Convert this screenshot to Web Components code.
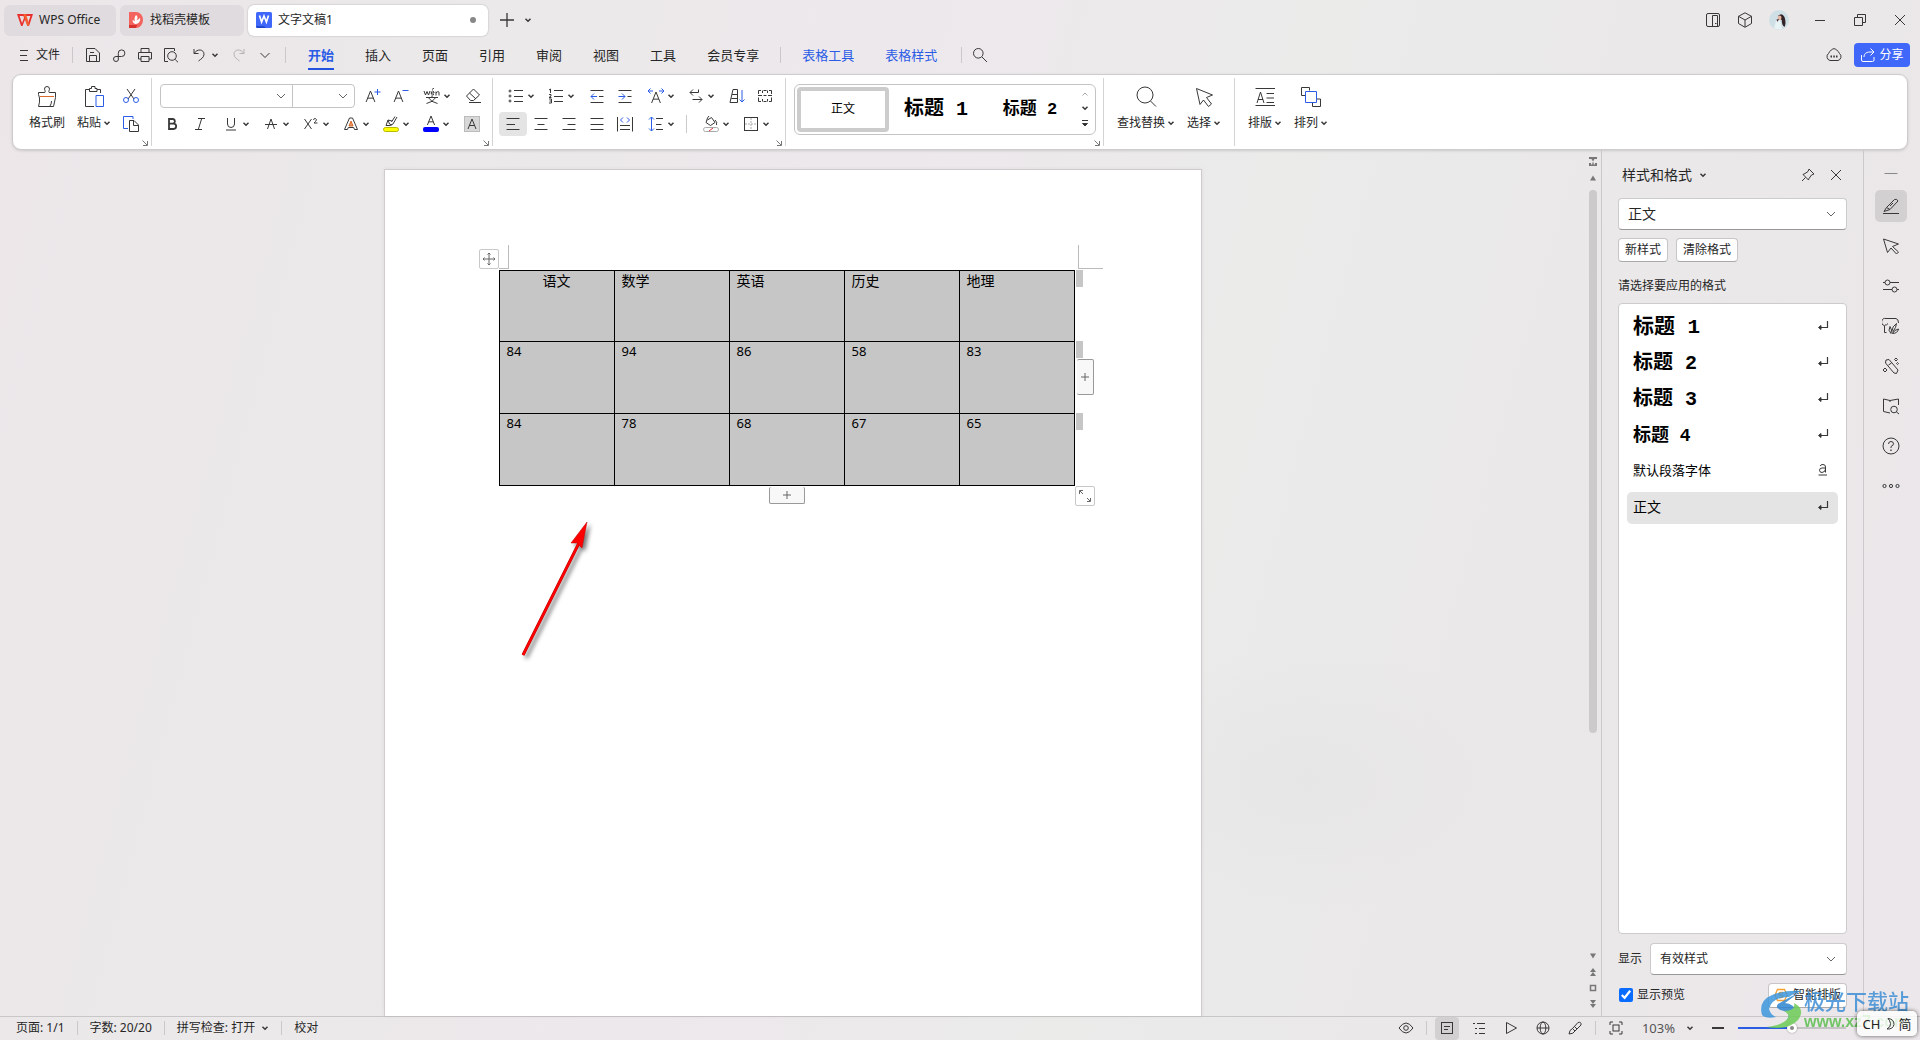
<!DOCTYPE html>
<html lang="zh-CN">
<head>
<meta charset="utf-8">
<title>文字文稿1 - WPS Office</title>
<style>
html,body{margin:0;height:100%;overflow:hidden}
body{font-family:"Noto Sans","Noto Sans CJK SC",sans-serif;font-size:12px;line-height:16px;color:#262626}
</style>
</head>
<body>
<wps-app></wps-app>
<script>
const s = (d, extra = '') => `<path d="${d}" ${extra}/>`;
const BLUE = 'stroke="#2b5ce6"';
const letterA = (x, y, h) => s(`M${x - h * .4} ${y + h}L${x} ${y}L${x + h * .4} ${y + h}M${x - h * .26} ${y + h * .65}H${x + h * .26}`);
// name: [width, height, markup]
const ICONS = {
  caret: [8, 8, s('M1.5 2.8L4 5.2L6.5 2.8', 'stroke-width="1.5"')],
  chev: [12, 12, s('M2 4L6 8L10 4', 'stroke="#666"')],
  launch: [8, 8, s('M1.5 1.5L6 6M6.5 2V6.5H2', 'stroke="#777"')],
  wps: [16, 14, `<g stroke="none"><path fill="#e8302f" d="M0 1H16L12 13H10.400L8 6.500L5.500 13H4.100Z"/><path fill="#e9dfe1" d="M2.600 3H6.400L7 5L5 10ZM9 3H13.400L11.300 9.500L8.600 4Z"/><path fill="#f4602f" d="M6.300 1H9L12.200 11L11.500 13H10.400Z"/></g>`],
  daoke: [16, 16, `<g stroke="none"><path fill="#f4645f" d="M1 0H8A7 8 0 0 1 8 16H1Z"/><path fill="#d8322f" d="M1 13H9L8 16H1Z"/><path fill="#fff" d="M8 3C10.500 5 9.500 7 8.500 8.200C10 8 11.500 7 12 5.800C13 9.500 10 12 8 12C5.500 12 4 9.500 5 7.500C5.300 8.500 6 9 6.800 9C6.300 7 6.500 5 8 3Z"/></g>`],
  word: [16, 16, `<g stroke="none"><rect width="16" height="16" rx="1.500" fill="#3f68fa"/><path fill="#2148cf" d="M0 14H8L10 16H1.500Q0 16 0 14Z"/></g>` + s('M3.500 3.500L5.600 10L8 4L10.400 10L12.500 3.500', 'stroke="#fff" stroke-width="1.700"')],
  plus: [14, 14, s('M7 0V14M0 7H14', 'stroke-width="1.300"')],
  panels: [16, 16, '<rect x="1.5" y="1.5" width="13" height="13" rx="1.5"/>' + s('M7.500 14.500V3.500H12.500V14.500M10 11.500H11.500') ],
  cube: [16, 16, s('M8 .8L14.500 4.300V11.500L8 15.300L1.500 11.500V4.300ZM1.500 4.300L8 8L14.500 4.300M8 8V15')],
  avatar: [20, 20, '<g stroke="none"><circle cx="10" cy="10" r="10" fill="#cfdfe6"/><path fill="#e9f2f5" d="M5 18L7 11L11 10L13 19Q9 20.500 5 18Z"/><path fill="#35232a" d="M9 6Q13 2 15.500 7Q17.500 13 15.500 17Q12.500 15 12.800 10L9 9Z"/><path fill="#e5b9a5" d="M8.500 6.500Q11 4.500 12.500 7L12 10Q9 10.500 8.500 6.500Z"/><path fill="#4b3238" d="M7.500 9.500L10 9L8.500 12Z"/></g>'],
  min: [12, 12, s('M1 6.500H11')],
  minus: [12, 12, s('M0 6H12', 'stroke-width="2"')],
  restore: [12, 12, s('M3.500 3V.500H11.500V8.500H9M.500 3.500H8.500V11.500H.500Z')],
  close: [12, 12, s('M1 1L11 11M11 1L1 11')],
  menu: [10, 12, s('M1 1.500H9M1 6.500H8M1 11.500H9')],
  save: [16, 16, s('M1.500 1.500H10L14.500 6V14.500H1.500ZM4.500 14V8.500H11.500V14M5 5.500H9')],
  link: [16, 16, s('M7.500 12A2.500 2.500 0 1 1 5 9.500H10.500A3.300 3.300 0 1 0 7.300 6.500V12')],
  print: [16, 16, s('M4 5V1.500H12V5M4 12H1.500V5.500H14.500V12H12M4 9.500H12V14.500H4Z')],
  preview: [16, 16, s('M5 14.500H1.500V1.500H11.500V4M12.200 12.500L15 15.300') + '<circle cx="9" cy="9" r="4.300"/>'],
  undo: [16, 16, s('M3 2V6.500H7.500M3.300 6.300C6 1.500 13 2 13 7.300C13 10.500 10 12 7.500 14')],
  redo: [16, 16, s('M13 2V6.500H8.500M12.700 6.300C10 1.500 3 2 3 7.300C3 10.500 6 12 8.500 14', 'stroke="#b5b3b5"')],
  down: [12, 12, s('M1.500 4L6 8.500L10.500 4')],
  search: [16, 16, '<circle cx="6.300" cy="6.300" r="4.800"/>' + s('M10 10L15 15')],
  cloud: [18, 16, s('M5 13.500A4 4 0 0 1 3.500 6.500C5 3.500 7.500 1.700 9 1.700C10.500 1.700 13 3.500 14.500 6.500A4 4 0 0 1 13 13.500Z') + s('M5.500 9.500H7M8.300 9.500H9.800M11 9.500H12.500', 'stroke-width="1.800"')],
  share: [16, 16, s('M10.500 1.500L14 5L10.500 8.500M14 5H10C5.500 5 4 7.500 4 10M1.500 8V13Q1.500 14.500 3 14.500H12.500Q14 14.500 14 13V10', 'stroke="#fff"')],
  brush: [22, 22, s('M2.500 8.500V6.500H8.800C9.800 5.500 8.500 4 8.500 3A2.500 2.500 0 0 1 13.500 3C13.500 4 12.200 5.500 13.200 6.500H19.500V11.500L17.500 20.500H2.500Q4 16 3.500 12L2.500 8.500M14 20Q15.500 18 15.500 15') + s('M4 10.500H18', 'stroke="#d96a2b"')],
  paste: [22, 22, s('M6 3.500H2.500V20.500H11M14 3.500H17.500V7M6.500 5.500V2.500H8.500V.500H12V2.500H14V5.500Z') + s('M13 9.500H20.500V20.500H13Z', BLUE)],
  cut: [16, 16, s('M4 1L11 11M12 1L5 11') + '<g stroke="#2b5ce6"><circle cx="3" cy="12" r="2.500"/><circle cx="13" cy="12" r="2.500"/></g>'],
  copy: [18, 18, s('M6 13.500H1.500V1.500H11V4', BLUE) + s('M7.500 5.500H12L16.500 10V16.500H7.500ZM11.500 6V10.500H16')],
  aplus: [16, 16, letterA(5.5, 3, 11) + s('M12.500 1V7M9.500 4H15.500', BLUE)],
  aminus: [16, 16, letterA(5.5, 3, 11) + s('M9.500 2.500H15.500', BLUE)],
  wen: [18, 16, s('M1 3L2.500 7L4 3.500L5.500 7L7 3M8 5H11V4Q9.500 2 8.300 4V6Q9 7.500 11 6.500M9 1.500L11 0M13 7.500V3.500M13 5Q16 2 16 5V7.500M3 9.500H15M9 7.500V9.500M5.500 9.800Q8 14 14.500 15.500M12.500 9.800Q10 14 3.500 15.500')],
  eraser: [16, 16, s('M1.500 8L8.500 1L14.500 7L8.500 12.500H5.500ZM4.500 5L11 11M4 14.500H16')],
  bold: [16, 16, s('M5 3H9A2.400 2.400 0 0 1 9 7.700H5ZM5 7.700H9.500A2.600 2.600 0 0 1 9.500 13H5Z', 'stroke-width="1.800"')],
  italic: [16, 16, s('M6 2.500H13M3 13.500H10M9.700 2.500L6.300 13.500')],
  under: [16, 16, s('M4.500 2V8A3.500 3.500 0 0 0 11.500 8V2M3 14H13')],
  strike: [16, 16, s('M4.500 13L8 3L11.500 13M2 8.500H14')],
  sup: [16, 16, s('M1.500 3L8.500 13M8.500 3L1.500 13M10.500 4Q11 2 12.500 2.500Q14.500 3.500 12.500 5.500L11 7H14.500')],
  aout: [16, 16, s('M1.500 13.500L6.500 2H9.500L14.500 13.500H11.500L10.700 11.500H5.300L4.500 13.500Z') + s('M8 5L10 10H6Z', 'stroke="#d96a2b" fill="#e59a6a"')],
  mark: [16, 18, s('M3 10.500L5 5L6.500 9L9 10M3 10.500H7L10 9L14 2M8.500 7L12 1.500M5 5L9 6') + '<rect x=".5" y="12.500" width="15" height="4" rx="2" fill="#ff0" stroke="#b9b900"/>'],
  fcolor: [16, 18, letterA(8, 1, 9) + '<rect y="12" width="16" height="5" rx="2" fill="#00f" stroke="none"/>'],
  shade: [16, 16, '<rect x=".5" y=".5" width="15" height="15" fill="#d8d8d8" stroke="#bbb"/>' + letterA(8, 3, 10)],
  bullets: [16, 16, '<circle cx="2" cy="3" r="1"/><circle cx="2" cy="8" r="1"/><circle cx="2" cy="13" r="1"/>' + s('M6 2.500H15M6 8.500H15M6 13.500H15')],
  nums: [16, 16, s('M1 2L2.500 1V5M1 6.500H3V8L1 9.500H3.500M1 11H3.500V15H1M1.500 13H3.500M6 2.500H15M6 8.500H15M6 13.500H15')],
  outd: [16, 16, s('M1.500 2.500H14.500M10 8.500H14.500M1.500 14.500H14.500') + s('M8 8.500H2M5 5.500L2 8.500L5 11.500', BLUE)],
  ind: [16, 16, s('M1.500 2.500H14.500M10.500 8.500H14.500M1.500 14.500H14.500') + s('M1.500 8.500H8M5 5.500L8 8.500L5 11.500', BLUE)],
  ascale: [18, 16, letterA(9, 4, 11) + s('M6 3H1M3.500 .500L1 3L3.500 5.500M12 3H17M14.500 .500L17 3L14.500 5.500', BLUE)],
  wrap: [16, 16, s('M5 1.500L2 4.500L5 7.500M2 4.500H10.500V1.500M11 8.500L14 11.500L11 14.500M14 11.500H4.500')],
  sort: [16, 16, s('M1 14.500H8.500V1.500H4ZM3 6.500H8M2.300 10.500H8') + s('M13 2V14M10.500 11.500L13 14L15.500 11.500', BLUE)],
  ruler: [16, 16, s('M1.500 6V2.500H4M6.500 2.500H9.500M12 2.500H14.500V6M1.500 9.500V13.500H4M6.500 13.500H9.500M12 13.500H14.500V9.500M1 7.500H5M6.500 7.500H9.500M11 7.500H15M5.500 2.500V5M10.500 2.500V5M5.500 11V13.500M10.500 11V13.500')],
  al: [16, 16, s('M1.500 2.500H14.500M1.500 8.500H10M1.500 13.500H14.500')],
  ac: [16, 16, s('M1.500 2.500H14.500M4.500 8.500H11.500M1.500 13.500H14.500')],
  ar: [16, 16, s('M1.500 2.500H14.500M6.500 8.500H14.500M1.500 13.500H14.500')],
  aj: [16, 16, s('M1.500 2.500H14.500M1.500 8.500H14.500M1.500 13.500H14.500')],
  dist: [16, 16, s('M.5 1V15.500M15.500 1V15.500M3 9.500H13M3 13.500H13') + s('M6 1.500L3.500 4L6 6.500M10 1.500L12.500 4L10 6.500', BLUE)],
  lines: [16, 16, s('M8 2.500H15M8 8.500H13.500M8 13.500H15') + s('M3.500 1V15M1 3.500L3.500 1L6 3.500M1 12.500L3.500 15L6 12.500', BLUE)],
  bucket: [16, 18, s('M6 1L4.500 3L3 7.500L7.500 10.500L12 7.500L8.500 2.500L4.500 5M12 5Q14.500 7 13.500 10') + '<rect x=".5" y="12.500" width="15" height="4" rx="2" stroke="#aaa"/>' + s('M6 16L10 13', 'stroke="#e03030"')],
  borders: [16, 16, '<rect x="1.500" y="1.500" width="13" height="13"/>' + s('M8 2V14M2 8H14', 'stroke="#aaa" stroke-dasharray="2 1"')],
  up8: [8, 8, s('M1.500 5.500L4 3L6.500 5.500', 'stroke="#aaa"')],
  more8: [8, 10, s('M1 1.500H7') + s('M1.500 4.500H6.500L4 7Z', 'fill="#333"')],
  find: [22, 22, '<circle cx="10" cy="9" r="8"/>' + s('M15.500 15L21 20.500')],
  arrow: [22, 22, s('M3.500 2.500L19.500 9L13.500 11.500L18.500 18L15.500 20.500L10.500 14L7 18.500Z')],
  layout: [22, 22, s('M1.500 2.500H21M1.500 19.500H21M3 17L6.500 6L10 17M4 13.500H9M12.500 7.500H20M12.500 12H20M12.500 16.500H20')],
  arrange: [22, 22, s('M5.500 9.500H1.500V1.500H9.500V4.500M16.500 13H20.500V20.500H12.500V17') + s('M5.500 5.500H16.500V16.500H5.500Z', BLUE)],
  move: [14, 14, s('M7 1V13M1 7H13M5.500 2.500L7 1L8.500 2.500M5.500 11.500L7 13L8.500 11.500M2.500 5.500L1 7L2.500 8.500M11.500 5.500L13 7L11.500 8.500', 'stroke="#666"')],
  plus8: [8, 8, s('M4 0V8M0 4H8', 'stroke="#666"')],
  resize: [14, 14, s('M1.500 5V1.500H5M2 2L5 5M12.500 9V12.500H9M9 9L12 12', 'stroke="#666"')],
  split: [10, 10, '<g stroke="none" fill="#777"><path d="M1 0H9V2H6.500L5 4.500L3.500 2H1ZM1 9V6H3V7.500H4.300V5.500H5.700V7.500H7V6H9V9Z"/></g>'],
  tup: [8, 8, '<path fill="#777" stroke="none" d="M1 6.500L4 1.500L7 6.500Z"/>'],
  tdn: [8, 8, '<path fill="#777" stroke="none" d="M1 1.500L4 6.500L7 1.500Z"/>'],
  dup: [8, 8, '<path fill="#777" stroke="none" d="M1 4L4 0L7 4ZM1 8L4 4L7 8Z"/>'],
  ddn: [8, 8, '<path fill="#777" stroke="none" d="M1 0L4 4L7 0ZM1 4L4 8L7 4Z"/>'],
  sq: [8, 8, '<rect x="1.500" y="1.500" width="5" height="5" stroke="#777" stroke-width="1.500"/>'],
  pin: [14, 14, s('M8 1L13 6L10.500 7L8 10.500L7.500 12L2 6.500L4 5.500L7 3.500ZM4.500 9.500L1 13')],
  dash: [16, 4, s('M1.500 1.500H14.500', 'stroke="#888"')],
  pen: [18, 18, s('M4.500 10.500L12.500 2.500Q15 1.500 16 4L8 12.500ZM4.500 10.500L2 14.500L8 12.500M8 9L11 6M1 16.500H17')],
  sel: [18, 18, s('M1.500 2L16.500 7L10.500 9.500L16.500 15L14.500 17L9 11L5.500 15.500Z')],
  sliders: [18, 18, '<circle cx="5.500" cy="5.500" r="2.500"/><circle cx="12.500" cy="12.500" r="2.500"/>' + s('M1 5.500H3M8 5.500H17M1 12.500H10M15 12.500H17')],
  image: [18, 18, s('M4.500 15.500H2.500V8.500A3.500 3.500 0 0 1 4 1.500H14Q16.500 2 16.500 6M3 8Q4.500 8.500 6 6.500M9 16.500Q5.500 13.500 8 9.500Q10.500 13 9 16.500M10 14Q10 9.500 14.500 6.500Q14.500 10 10.500 15.500M10.500 16.500Q12.500 12.500 16.500 12Q15.500 16.500 10.500 16.500')],
  wand: [18, 18, s('M4 3L7 2.500L16 13L14.500 16.500L12 16L3.500 6ZM6.500 8L9.500 6M14 1L15.500 2.500L14 4L12.500 2.500ZM3 11L5 13L3 15L1 13ZM15.500 5.500L16.500 6.500L15.500 7.500L14.500 6.500Z')],
  book: [18, 18, s('M8 16L1.500 14.500V2L8 3.500L16.500 2V8M8 3.500V5M14.500 15L17 17') + '<circle cx="12" cy="12.500" r="3.300"/>'],
  help: [18, 18, '<circle cx="9" cy="9" r="8"/>' + s('M6.500 7Q6.500 4.500 9 4.500Q11.500 4.500 11.500 6.800Q11.500 8.300 9 9.500V11') + s('M9 12.500V14', 'stroke-width="1.300"')],
  dots: [18, 6, '<circle cx="2.500" cy="3" r="1.600"/><circle cx="9" cy="3" r="1.600"/><circle cx="15.500" cy="3" r="1.600"/>'],
  ret: [12, 12, s('M10.500 1V7.500H2', 'stroke-width="1.200"') + '<path fill="#333" d="M1.500 7.500L4 5.500V9.500Z"/>'],
  und: [12, 14, s('M3 3Q3.500 1.500 6 1.500Q8.500 1.500 8.500 4V9.500M8.500 5H5Q2.500 5 2.500 7.200Q2.500 9.500 5 9.500Q8.500 9 8.500 6M1.500 12H10')],
  smart: [14, 14, s('M3.500 1.500H10.500L13 7L10.500 12.500H3.500L1 7ZM9 4.500H6.500Q5 4.500 5 5.800Q5 7 7 7Q9 7 9 8.300Q9 9.500 7.500 9.500H5', 'stroke="#f5a030" stroke-width="1.300"')],
  eye: [16, 16, s('M1 8Q4.500 3 8 3Q11.500 3 15 8Q11.500 13 8 13Q4.500 13 1 8Z') + '<circle cx="8" cy="8" r="2.300"/>'],
  doc: [14, 14, '<rect x="1.500" y="1.500" width="11" height="11"/>' + s('M4 5.500H10M4 8.500H8')],
  outline: [14, 14, s('M1 2.500H3M5 2.500H13M3 7.500H5M7 7.500H13M3 12.500H5M7 12.500H13')],
  play: [14, 14, s('M2.500 1.500L12.500 7L2.500 12.500Z')],
  globe: [14, 14, '<circle cx="7" cy="7" r="6"/><ellipse cx="7" cy="7" rx="2.800" ry="6"/>' + s('M1 7H13')],
  ink: [14, 14, s('M4.500 7.500L10 1.500Q13.500 .500 13 4L7 10ZM4.500 7.500Q1.500 8.500 1 13Q5.500 13 7 10M6.500 5.500L9 8')],
  fit: [14, 14, '<rect x="4" y="4" width="6" height="6"/>' + s('M1 4V1H4M10 1H13V4M13 10V13H10M4 13H1V10')],
  moon: [14, 14, s('M6 1.500Q12 2 12 7.500Q11 12.500 5 12Q9 10 8.500 6.500Q8 3.500 6 1.500Z')],
  logo: [44, 42, '<g stroke="none"><path fill="#3d97dd" d="M2 26Q-2 12 12 6Q24 1 42 2Q34 4 29 8Q12 8 9 20Q10 25 16 28Q6 30 2 26Z"/><path fill="#2f86d0" d="M40 3Q30 8 18 15Q14 20 24 22Q32 25 26 32Q40 24 33 17Q29 14 25 14Z"/><path fill="#6ecb58" d="M6 38Q24 36 28 29Q30 25 24 22Q36 22 34 14Q46 20 38 31Q28 42 6 38Z"/></g>']
};

class Base extends HTMLElement {
  constructor() {
    super();
    this.attachShadow({ mode: 'open' }).innerHTML = `<style>
      *{box-sizing:border-box}
      button,select,input{font:inherit;color:inherit;margin:0}
      button{border:0;background:none;padding:0;display:inline-flex;align-items:center;justify-content:center;flex:none;white-space:nowrap}
      .vr{width:1px;background:#cbc8cb;flex:none}
      ${this.constructor.css}</style>${this.constructor.html}`;
  }
}
const define = (name, css, html) => customElements.define(name, class extends Base {
  static css = css;
  static html = html;
});
const ic = n => `<ui-icon name="${n}"></ui-icon>`;

customElements.define('ui-icon', class extends HTMLElement {
  constructor() { super(); this.attachShadow({ mode: 'open' }); }
  connectedCallback() {
    const [w, h, body] = ICONS[this.getAttribute('name')];
    this.shadowRoot.innerHTML = `<style>:host{display:inline-flex;flex:none}svg{display:block;fill:none;stroke:#383838;stroke-width:1}</style>
      <svg width="${w}" height="${h}" viewBox="0 0 ${w} ${h}" aria-hidden="true">${body}</svg>`;
  }
});

define('title-bar', `
  :host{display:flex;align-items:center;height:40px;padding:0 2px 0 4px;gap:4px}
  .tab{height:31px;border-radius:6px;background:#e0dbde;gap:6px;justify-content:flex-start;padding:0 0 0 13px;width:112px}
  .t2{width:124px;padding:0 8px}
  .t3{width:240px;background:#fff;padding:0 12px 0 8px;box-shadow:0 0 2px #0004}
  .t3 span{flex:1;text-align:left}
  .t3 i{width:6px;height:6px;border-radius:3px;background:#888}
  .add{width:22px;height:24px;margin-left:4px}
  .new{width:12px;height:24px}
  .sp{flex:1}
  .sys{width:28px;height:28px}.win{width:36px;height:28px}
  .me{width:32px;margin-right:3px}
`, `
  <button class="tab">${ic('wps')}<span>WPS Office</span></button>
  <button class="tab t2">${ic('daoke')}<span>找稻壳模板</span></button>
  <button class="tab t3">${ic('word')}<span>文字文稿1</span><i></i></button>
  <button class="add" aria-label="新建">${ic('plus')}</button>
  <button class="new" aria-label="新建列表">${ic('caret')}</button>
  <div class="sp"></div>
  <button class="sys" aria-label="侧栏">${ic('panels')}</button>
  <button class="sys" aria-label="应用">${ic('cube')}</button>
  <button class="sys me" aria-label="账号">${ic('avatar')}</button>
  <button class="win" aria-label="最小化">${ic('min')}</button>
  <button class="win" aria-label="还原">${ic('restore')}</button>
  <button class="win" aria-label="关闭">${ic('close')}</button>
`);

define('menu-bar', `
  :host{display:flex;align-items:center;height:34px;padding:0 10px 4px 19px}
  .file{gap:7px}
  .vr{height:16px}
  .v1{margin:0 7px 0 12px}.v2{margin:0 22px 0 7px}.v3{margin:0 21px}.v4{margin:0 10px 0 24px}
  .i{width:26px;height:24px}
  .u{width:42px;gap:4px;height:24px}
  nav{display:flex;gap:31px;font-size:13px}
  nav a{color:inherit;text-decoration:none;height:28px;line-height:26px;border-bottom:2px solid transparent;margin-top:2px}
  nav a.on{color:#2b5ce6;font-weight:700;border-color:#2152e0}
  nav.ctx a{color:#2b5ce6}
  .sp{flex:1}
  .cloud{margin-right:11px}
  .share{height:24px;width:56px;border-radius:4px;background:#3f68fa;color:#fff;gap:3px}
`, `
  <button class="file">${ic('menu')}<span>文件</span></button>
  <div class="vr v1"></div>
  <button class="i" aria-label="保存">${ic('save')}</button><button class="i" aria-label="输出">${ic('link')}</button>
  <button class="i" aria-label="打印">${ic('print')}</button><button class="i" aria-label="打印预览">${ic('preview')}</button>
  <button class="u" aria-label="撤销">${ic('undo')}${ic('caret')}</button>
  <button class="i" aria-label="恢复">${ic('redo')}</button><button class="i" aria-label="更多">${ic('down')}</button>
  <div class="vr v2"></div>
  <nav><a class="on" href="#">开始</a><a href="#">插入</a><a href="#">页面</a><a href="#">引用</a><a href="#">审阅</a><a href="#">视图</a><a href="#">工具</a><a href="#">会员专享</a></nav>
  <div class="vr v3"></div>
  <nav class="ctx"><a href="#">表格工具</a><a href="#">表格样式</a></nav>
  <div class="vr v4"></div>
  <button aria-label="搜索">${ic('search')}</button>
  <div class="sp"></div>
  <button class="cloud" aria-label="云同步">${ic('cloud')}</button>
  <button class="share">${ic('share')}<span>分享</span></button>
`);

define('ribbon-group', `
  :host{display:flex;position:relative;margin:3px 0;padding-top:6px;border-right:1px solid #d4d4d4}
  :host([last]){border:0}
  button{position:absolute;right:2px;bottom:-1px}
  :host(:not([launch])) button{display:none}
`, `<slot></slot><button aria-label="更多选项">${ic('launch')}</button>`);

define('tool-btn', `
  :host{display:inline-flex;flex:none}
  button{width:28px;height:24px;border-radius:4px}
  :host([wide]) button{width:36px}
  :host([split]) button{width:40px;gap:2px;padding-left:4px}
  :host([split]) slot{display:flex;width:18px;justify-content:center}
  :host([on]) button{background:#e4e4e4}
  :host(:not([split])) .c{display:none}
`, `<button><slot></slot><ui-icon class="c" name="caret"></ui-icon></button>`);

define('big-btn', `
  :host{display:inline-flex;flex:none}
  button{flex-direction:column;height:52px;padding:0 6px;gap:5px;justify-content:flex-start}
  .i{display:flex;height:26px;align-items:center}
  .l{display:flex;align-items:center;gap:2px}
  :host(:not([menu])) .c{display:none}
`, `<button><span class="i"><slot name="icon"></slot></span><span class="l"><slot></slot><ui-icon class="c" name="caret"></ui-icon></span></button>`);

const t = (n, a = '') => `<tool-btn ${a}>${ic(n)}</tool-btn>`;
const b = (n, l, a = 'menu') => `<big-btn ${a}><ui-icon slot="icon" name="${n}"></ui-icon>${l}</big-btn>`;
define('ribbon-bar', `
  :host{display:flex;box-sizing:border-box;height:76px;margin:0 12px;border:1px solid #cfcccf;border-radius:9px;background:#fff;box-shadow:0 1px 3px #0002}
  .g1{padding-left:10px;padding-right:6px}.g2{padding-left:6px;width:341px}.g3{padding-left:6px;width:293px}.g4{padding-left:8px;width:318px}.g5{padding-left:7px;width:131px}.g6{padding-left:7px}
  ribbon-group{box-sizing:border-box}
  .col{display:flex;flex-direction:column;gap:4px}
  .row{display:flex;align-items:center;height:24px}
  .combo{display:flex;width:195px;height:24px;border:1px solid #c4c4c4;border-radius:4px;margin:0 4px 0 2px}
  .combo label{display:flex;align-items:center;flex:1;min-width:0;padding-right:5px}
  .combo label+label{flex:none;width:62px;border-left:1px solid #c4c4c4}
  .combo input{border:0;background:none;flex:1;width:0;min-width:0;outline:0}
  .s4{width:4px}.vr{height:18px;margin:0 7px}
  .gal{display:flex;width:302px;height:51px;border:1px solid #c4c4c4;border-radius:6px;padding:2px;font-family:"Liberation Mono","Noto Sans CJK SC",monospace;color:#000}
  .gal button{flex:1}
  .gal .a{flex:none;width:92px;border:4px solid #ccc;border-radius:4px}
  .gal .b{font-size:21px;font-weight:700;font-family:"Liberation Sans","Noto Sans CJK SC",sans-serif;word-spacing:normal}
  .gal .c{font-size:17px;font-weight:700}
  .gal .b{font-family:inherit;font-size:20px}
  .gal .s{flex:none;display:flex;flex-direction:column;justify-content:space-around;width:16px;align-items:center}
  .gal .s button{flex:none}
`, `
  <ribbon-group class="g1" launch>
    ${b('brush', '格式刷', '')}${b('paste', '粘贴')}
    <div class="col">${t('cut')}${t('copy')}</div>
  </ribbon-group>
  <ribbon-group class="g2" launch><div class="col">
    <div class="row"><div class="combo"><label><input type="text" aria-label="字体">${ic('chev')}</label><label><input type="text" aria-label="字号">${ic('chev')}</label></div>${t('aplus')}${t('aminus')}${t('wen', 'split')}${t('eraser', 'wide')}</div>
    <div class="row">${t('bold')}${t('italic')}${t('under', 'split')}${t('strike', 'split')}${t('sup', 'split')}${t('aout', 'split')}${t('mark', 'split')}${t('fcolor', 'split')}${t('shade', 'wide')}</div>
  </div></ribbon-group>
  <ribbon-group class="g3" launch><div class="col">
    <div class="row">${t('bullets', 'split')}${t('nums', 'split')}<div class="s4"></div>${t('outd')}${t('ind')}${t('ascale', 'split')}${t('wrap', 'split')}<div class="s4"></div>${t('sort')}${t('ruler')}</div>
    <div class="row">${t('al', 'on')}${t('ac')}${t('ar')}${t('aj')}${t('dist')}${t('lines', 'split')}<div class="vr"></div>${t('bucket', 'split')}${t('borders', 'split')}</div>
  </div></ribbon-group>
  <ribbon-group class="g4" launch>
    <div class="gal"><button class="a">正文</button><button class="b">标题 1</button><button class="c">标题 2</button>
      <div class="s"><button aria-label="上一行">${ic('up8')}</button><button aria-label="下一行">${ic('caret')}</button><button aria-label="展开">${ic('more8')}</button></div></div>
  </ribbon-group>
  <ribbon-group class="g5">${b('find', '查找替换')}${b('arrow', '选择')}</ribbon-group>
  <ribbon-group class="g6" last>${b('layout', '排版')}${b('arrange', '排列')}</ribbon-group>
`);

define('doc-canvas', `
  :host{display:flex;flex:1;min-width:0}
  .view{flex:1;display:flex;justify-content:center;padding-top:19px;min-width:0}
  .page{width:818px;background:#fff;border:1px solid #cfcbce;border-bottom:0;padding:100px 125px 0 114px;position:relative;box-shadow:0 0 4px #0001}
  .wrap{position:relative}
  table{border-collapse:collapse;table-layout:fixed;width:576px;background:#c6c6c6;color:#000;font-family:"Noto Sans","Noto Sans CJK SC",sans-serif;font-size:13px}
  td,th{border:1px solid #000;outline:0;vertical-align:top;text-align:left;padding:1px 7px 0;height:72px;font-weight:400;line-height:17px}
  th{font-size:14px;height:71px;line-height:18px}
  th:first-child{text-align:center}
  .o{position:absolute}
  button.o{background:#fff;border:1px solid #c8c8c8;border-radius:2px}
  .mv{left:-20px;top:-21px;width:20px;height:20px}
  .m1{left:0;top:-25px;width:10px;height:24px;border:solid #bbb;border-width:0 1px 1px 0}
  .m2{left:579px;top:-25px;width:25px;height:24px;border:solid #bbb;border-width:0 0 1px 1px}
  .e{left:577px;width:7px;height:17px;background:#c6c6c6}
  .e1{top:0}.e2{top:71px}.e3{top:143px}
  button.r{left:578px;top:89px;width:17px;height:36px;background:#f8f8f8;border-color:#999;border-left:0}
  button.b{left:270px;top:217px;width:36px;height:17px;background:#f8f8f8;border-color:#999;border-top:0}
  .rs{left:576px;top:216px;width:20px;height:20px}
  .arrow{left:130px;top:340px;overflow:visible;filter:drop-shadow(3px 3px 2px #0008)}
  .scroll{width:16px;display:flex;flex-direction:column;align-items:center;padding:8px 0 8px;gap:8px}
  .track{flex:1;width:8px}
  .thumb{height:72%;border-radius:4px;background:#cccacb}
  .scroll button{height:8px}
`, `
  <div class="view"><div class="page">
    <div class="wrap">
      <table>
        <thead><tr><th>语文</th><th>数学</th><th>英语</th><th>历史</th><th>地理</th></tr></thead>
        <tbody><tr><td>84</td><td>94</td><td>86</td><td>58</td><td>83</td></tr>
        <tr><td>84</td><td>78</td><td>68</td><td>67</td><td>65</td></tr></tbody>
      </table>
      <button class="o mv" aria-label="移动表格">${ic('move')}</button>
      <div class="o m1"></div><div class="o m2"></div>
      <div class="o e e1"></div><div class="o e e2"></div><div class="o e e3"></div>
      <button class="o r" aria-label="添加列">${ic('plus8')}</button>
      <button class="o b" aria-label="添加行">${ic('plus8')}</button>
      <button class="o rs" aria-label="缩放表格">${ic('resize')}</button>
    </div>
    <svg class="o arrow" width="80" height="150" viewBox="0 0 80 150" aria-hidden="true"><path d="M8 145L66 29" stroke="#a00" stroke-width="3"/><path d="M8 145L66 29" stroke="#f00" stroke-width="2.400"/><path d="M72 12L56 33L62 33L67 38Z" fill="#f00" stroke="#b00" stroke-width=".5"/></svg>
  </div></div>
  <div class="scroll">
    <button aria-label="拆分">${ic('split')}</button><button aria-label="向上">${ic('tup')}</button>
    <div class="track"><div class="thumb"></div></div>
    <button aria-label="向下">${ic('tdn')}</button><button aria-label="上一页">${ic('dup')}</button><button aria-label="选择浏览对象">${ic('sq')}</button><button aria-label="下一页">${ic('ddn')}</button>
  </div>
`);

define('pick-box', `
  :host{display:flex;box-sizing:border-box;height:32px;position:relative;background:#fff;border:1px solid #ccc;border-bottom-color:#999;border-radius:4px;align-items:center}
  select{appearance:none;border:0;background:none;width:100%;height:100%;padding:0 28px 0 9px;outline:0}
  ui-icon{position:absolute;right:9px;pointer-events:none}
`, `<select></select>${ic('chev')}`);

const item = (txt, cls, mark = 'ret') => `<li><button class="${cls}"><span>${txt}</span>${ic(mark)}</button></li>`;
define('style-pane', `
  :host{display:flex;flex-direction:column;width:262px;border-left:1px solid #ccc9cc;padding:15px 16px 9px}
  header{display:flex;align-items:center;height:20px;font-size:14px;padding:0 5px 0 4px}
  header .n{gap:7px}.sp{flex:1}header .x{margin-left:15px}
  .cur{margin-top:13px;font-size:14px}
  .acts{display:flex;gap:8px;margin:8px 0 16px}
  .btn{height:24px;border:1px solid #c8c5c8;border-bottom-color:#aaa;border-radius:4px;background:#fff;padding:0 6px}
  ul{list-style:none;flex:1;margin:9px 0;padding:8px;background:#fff;border:1px solid #ccc;border-radius:4px;display:flex;flex-direction:column;gap:4px;color:#000;font-family:"Liberation Mono","Noto Sans CJK SC",monospace}
  li{display:flex}
  li button{flex:1;height:32px;justify-content:space-between;padding:0 9px 0 6px;border-radius:5px}
  li ui-icon{margin-bottom:5px}
  .h{font-weight:700}.s21{font-size:21px}.s20{font-size:20px}.s18{font-size:18px}.s13{font-size:13px}.s14{font-size:14px}
  .on{background:#e4e4e4}
  .show{display:flex;align-items:center;gap:8px}
  .show pick-box{flex:1}
  .foot{display:flex;align-items:center;justify-content:space-between;margin-top:8px;height:24px}
  .foot label{display:flex;align-items:center;gap:4px}
  .foot input{width:14px;height:14px;margin-left:1px;accent-color:#0a6cff}
  .foot .btn{gap:5px;height:25px;width:79px}
`, `
  <header><button class="n"><span>样式和格式</span>${ic('caret')}</button><div class="sp"></div><button aria-label="固定">${ic('pin')}</button><button class="x" aria-label="关闭">${ic('close')}</button></header>
  <pick-box class="cur" value="正文" label="当前样式"></pick-box>
  <div class="acts"><button class="btn">新样式</button><button class="btn">清除格式</button></div>
  <div>请选择要应用的格式</div>
  <ul>${item('标题 1', 'h s21')}${item('标题 2', 'h s20')}${item('标题 3', 'h s20')}${item('标题 4', 'h s18')}${item('默认段落字体', 's13', 'und')}${item('正文', 's14 on')}</ul>
  <div class="show"><span>显示</span><pick-box value="有效样式" label="显示"></pick-box></div>
  <div class="foot"><label><input type="checkbox" checked>显示预览</label><button class="btn">${ic('smart')}<span>智能排版</span></button></div>
`);

define('tool-rail', `
  :host{display:flex;box-sizing:border-box;flex-direction:column;align-items:center;gap:8px;width:57px;border-left:1px solid #ccc9cc;padding:16px 2px 0 0}
  button{width:32px;height:32px;border-radius:5px}
  .d{height:16px}.on{background:#d3d0d2}
`, `<button class="d" aria-label="折叠">${ic('dash')}</button><button class="on" aria-label="样式">${ic('pen')}</button>` +
  [['sel', '选择'], ['sliders', '属性'], ['image', '图库'], ['wand', '工具'], ['book', '查阅'], ['help', '帮助'], ['dots', '更多']].map(([n, l]) => `<button aria-label="${l}">${ic(n)}</button>`).join(''));

define('status-bar', `
  :host{display:flex;box-sizing:border-box;align-items:center;height:24px;border-top:1px solid #c9c6c8;padding:0 74px 1px 16px}
  .vr{height:14px;margin:0 12px}
  .sp{flex:1}
  .c{gap:6px}
  .i{width:32px;height:23px}
  .w{width:24px;border-radius:4px;background:#d3d0d2;margin:0 4px}
  .v5{margin:0 4px}
  .e{width:24px;margin-right:4px}
  .z{gap:11px;margin:0 18px 0 10px;font-size:13px;color:#555}
  input{appearance:none;width:108px;height:2px;margin-left:14px;background:linear-gradient(90deg,#2b5ce6 50%,#c4c2c4 50%)}
  input::-webkit-slider-thumb{appearance:none;width:10px;height:10px;border-radius:5px;background:#888;border:3px solid #fff;box-shadow:0 0 2px #0006}
`, `
  <span>页面: 1/1</span><div class="vr"></div><span>字数: 20/20</span><div class="vr"></div>
  <button class="c"><span>拼写检查: 打开</span>${ic('caret')}</button><div class="vr"></div><button>校对</button>
  <div class="sp"></div>
  <button class="i e" aria-label="护眼">${ic('eye')}</button><div class="vr v5"></div>
  <button class="i w" aria-label="页面视图">${ic('doc')}</button><button class="i" aria-label="大纲">${ic('outline')}</button><button class="i" aria-label="阅读">${ic('play')}</button><button class="i" aria-label="网页">${ic('globe')}</button><button class="i" aria-label="书写">${ic('ink')}</button>
  <div class="vr v5"></div><button class="i" aria-label="适应">${ic('fit')}</button>
  <button class="z"><span>103%</span>${ic('caret')}</button>
  <button aria-label="缩小">${ic('minus')}</button>
  <input type="range" min="0" max="100" value="50" aria-label="缩放">
`);

define('site-mark', `
  :host{position:absolute;right:11px;bottom:9px;display:flex;align-items:center;pointer-events:none;opacity:.85}
  b{display:block;font-size:21px;line-height:24px;color:#3e8fd6;font-weight:500}
  i{display:block;font:700 16px/18px "Liberation Sans",sans-serif;color:#5cbf50}
`, `${ic('logo')}<div><b>极光下载站</b><i>www.xz7.com</i></div>`);

define('ime-box', `
  :host{position:absolute;right:3px;bottom:4px;display:flex;align-items:center;justify-content:center;gap:2px;width:60px;height:25px;background:#fffc;border-radius:5px;box-shadow:0 0 4px #0009;font-size:13px;color:#222}
`, `<span>CH</span>${ic('moon')}<span>简</span>`);

define('wps-app', `
  :host{display:flex;flex-direction:column;height:100vh;position:relative;overflow:hidden;background:radial-gradient(ellipse at 68% 75%,#e7e6e6 0,#e7e6e600 12%),linear-gradient(105deg,#ece6e9 0,#ebe9e9 22%,#ede8ec 42%,#ebebea 60%,#eae8e9 78%,#ece7ea 100%)}
  main{flex:1;display:flex;min-height:0}
`, `
  <title-bar></title-bar><menu-bar></menu-bar><ribbon-bar></ribbon-bar>
  <main><doc-canvas></doc-canvas><style-pane></style-pane><tool-rail></tool-rail></main>
  <status-bar></status-bar>
  <site-mark></site-mark><ime-box></ime-box>
`);

const fill = root => root.querySelectorAll('*').forEach(el => {
  if (el.localName === 'pick-box') {
    const sel = el.shadowRoot.querySelector('select');
    sel.setAttribute('aria-label', el.getAttribute('label'));
    sel.add(new Option(el.getAttribute('value')));
  }
  if (el.shadowRoot) fill(el.shadowRoot);
});
fill(document);
</script>
</body>
</html>
